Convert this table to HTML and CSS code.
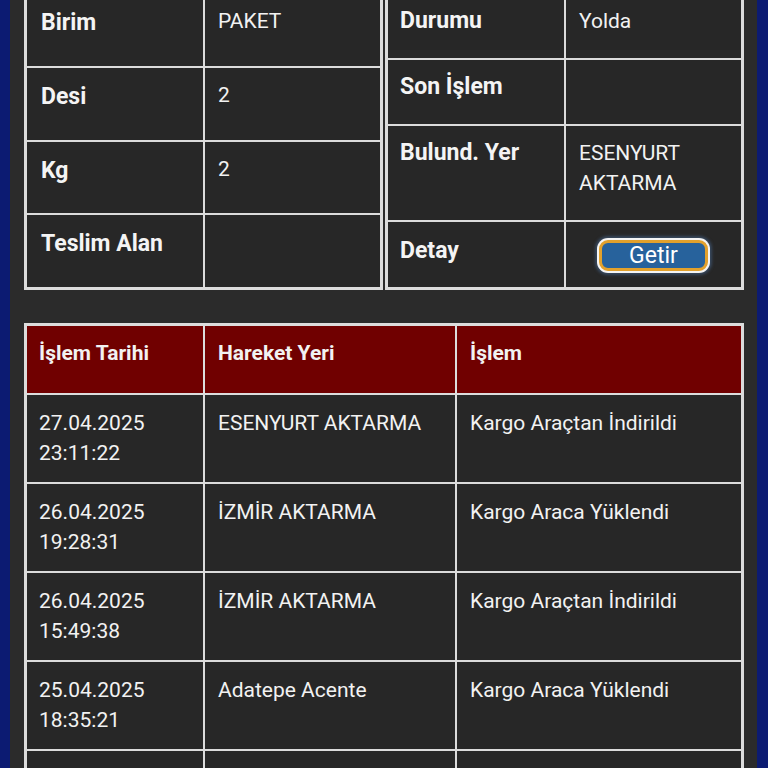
FILE: index.html
```html
<!DOCTYPE html>
<html lang="tr">
<head>
<meta charset="utf-8">
<title>Kargo Takip</title>
<link rel="stylesheet" href="styles.css">
</head>
<body>
<div class="panel">
  <div class="info">
    <div class="grid left">
      <div class="cell label">Birim</div><div class="cell value">PAKET</div>
      <div class="cell label">Desi</div><div class="cell value">2</div>
      <div class="cell label">Kg</div><div class="cell value">2</div>
      <div class="cell label">Teslim Alan</div><div class="cell value"></div>
    </div>
    <div class="grid right">
      <div class="cell label">Durumu</div><div class="cell value">Yolda</div>
      <div class="cell label">Son İşlem</div><div class="cell value"></div>
      <div class="cell label">Bulund. Yer</div><div class="cell value">ESENYURT<br>AKTARMA</div>
      <div class="cell label detay">Detay</div><div class="cell btncell"><button class="getir">Getir</button></div>
    </div>
  </div>

  <div class="history">
    <div class="hcell head">İşlem Tarihi</div><div class="hcell head">Hareket Yeri</div><div class="hcell head">İşlem</div>
    <div class="hcell">27.04.2025<br>23:11:22</div><div class="hcell">ESENYURT AKTARMA</div><div class="hcell">Kargo Araçtan İndirildi</div>
    <div class="hcell">26.04.2025<br>19:28:31</div><div class="hcell">İZMİR AKTARMA</div><div class="hcell">Kargo Araca Yüklendi</div>
    <div class="hcell">26.04.2025<br>15:49:38</div><div class="hcell">İZMİR AKTARMA</div><div class="hcell">Kargo Araçtan İndirildi</div>
    <div class="hcell">25.04.2025<br>18:35:21</div><div class="hcell">Adatepe Acente</div><div class="hcell">Kargo Araca Yüklendi</div>
    <div class="hcell">25.04.2025<br>16:02:10</div><div class="hcell">Adatepe Acente</div><div class="hcell">Kargo Kabul Edildi</div>
  </div>
</div>
</body>
</html>
```

FILE: styles.css
```css
html, body {
  margin: 0;
  padding: 0;
  height: 768px;
  overflow: hidden;
}
body {
  background: #0c1b72;
  font-family: Roboto, "Liberation Sans", sans-serif;
  color: #f2f2f2;
}
.panel {
  margin: 0 11px 0 10px;
  padding: 0 13px 0 14px;
  background: #2b2b2b;
  min-height: 800px;
}
.info {
  display: flex;
  gap: 2px;
  margin-top: -9px;
}
.grid {
  flex: 1;
  display: grid;
  grid-template-columns: 176px 1fr;
  gap: 2px;
  padding: 3px;
  background: #dcdcdc;
}
.left {
  grid-template-rows: repeat(4, 1fr);
}
.cell {
  background: #272727;
  padding: 12px 13px 22px 13px;
  line-height: 30px;
}
.label {
  font-weight: 700;
  font-size: 23px;
  color: #f4f4f4;
}
.left .label {
  padding-left: 14px;
  padding-top: 14px;
}
.value {
  font-size: 21px;
  padding-top: 12px;
}
.right .label {
  padding-left: 12px;
}
.right .detay {
  padding-top: 14px;
  padding-bottom: 21px;
}
.btncell {
  display: flex;
  align-items: center;
  justify-content: center;
  padding: 0;
}
.getir {
  width: 109px;
  height: 31px;
  box-sizing: border-box;
  border: 3px solid #e2a12c;
  border-radius: 9px;
  background: #27629c;
  color: #fff;
  font-family: Roboto, "Liberation Sans", sans-serif;
  font-size: 23px;
  line-height: 23px;
  padding: 0;
  box-shadow: 0 0 0 2px #f4f4f4, 0 0 3px 4px rgba(70, 100, 140, 0.55);
  margin-top: 2px;
}
.history {
  margin-top: 33px;
  display: grid;
  grid-template-columns: 176px 250px 1fr;
  gap: 2px;
  padding: 3px;
  background: #dcdcdc;
}
.hcell {
  background: #272727;
  font-size: 21px;
  line-height: 30px;
  padding: 13px 13px 14px 13px;
}
.hcell:nth-child(3n+1) {
  padding-left: 12px;
}
.head {
  background: #700000;
  font-weight: 700;
  font-size: 21px;
  padding-top: 12px;
  padding-bottom: 25px;
}
```
